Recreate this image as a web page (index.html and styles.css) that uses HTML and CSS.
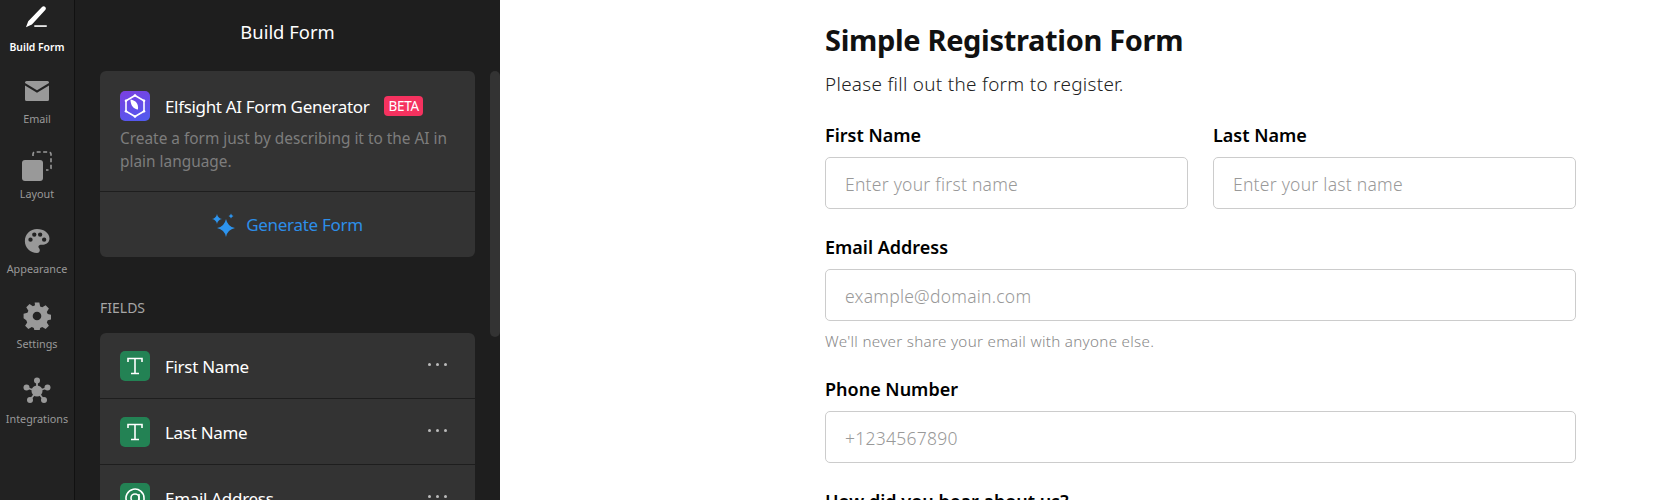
FILE: index.html
```html
<!DOCTYPE html>
<html lang="en">
<head>
    <meta charset="UTF-8">
    <title>Build Form</title>
    <link rel="stylesheet" href="styles.css">
</head>
<body>
    <nav class="rail">
        <a class="rail-item rail-item-active">
            <span class="rail-icon"><svg viewBox="0 0 24 24" width="26" height="26"><path d="M16.600 1.800c.9-.8 2.200-.8 3 0 .8.8.8 2 0 2.900L7.300 17.900 1.800 20.600 3.900 15z"/><rect x="9.500" y="18.700" width="11.500" height="1.500"/></svg></span>
            <span>Build Form</span>
        </a>
        <a class="rail-item">
            <span class="rail-icon"><svg viewBox="0 0 24 20" width="24" height="20"><path d="M0 1.500A1.500 1.500 0 0 1 1.500 0h21A1.500 1.500 0 0 1 24 1.500v.6l-12 7.200L0 2.100zM0 4.600l12 7.200 12-7.200v13.900a1.500 1.500 0 0 1-1.500 1.500h-21A1.500 1.500 0 0 1 0 18.500z"/></svg></span>
            <span>Email</span>
        </a>
        <a class="rail-item">
            <span class="rail-icon"><svg viewBox="0 0 30 30" width="30" height="30"><rect x="0" y="9" width="21" height="21" rx="3"/><path class="dash" d="M11 5V3a2 2 0 0 1 2-2h14a2 2 0 0 1 2 2v14a2 2 0 0 1-2 2h-3"/></svg></span>
            <span>Layout</span>
        </a>
        <a class="rail-item">
            <span class="rail-icon"><svg viewBox="0 0 24 24" width="26" height="26" fill-rule="evenodd"><path d="M12 1C5.700 1 .8 5.800.8 12S5.800 23 12 23c1.500 0 2.600-1.100 2.600-2.500 0-.7-.3-1.200-.7-1.700-.4-.4-.6-.9-.6-1.400 0-1.100.9-2 2-2h2.500c3.300 0 5.700-2.500 5.700-5.600C23.500 4.800 18.500 1 12 1zM6 12.800a2 2 0 1 1 0-4 2 2 0 0 1 0 4zm3.500-4.700a2 2 0 1 1 0-4 2 2 0 0 1 0 4zm5.400 0a2 2 0 1 1 0-4 2 2 0 0 1 0 4zm3.700 4.700a2 2 0 1 1 0-4 2 2 0 0 1 0 4z"/></svg></span>
            <span>Appearance</span>
        </a>
        <a class="rail-item">
            <span class="rail-icon"><svg viewBox="0 0 24 24" width="28" height="28" fill-rule="evenodd"><path d="M10 .5h4l.7 3.300 1.800.8 2.900-1.800 2.800 2.800-1.800 2.900.8 1.800 3.300.7v4l-3.300.7-.8 1.800 1.800 2.900-2.800 2.800-2.900-1.800-1.800.8-.7 3.300h-4l-.7-3.300-1.800-.8-2.900 1.800-2.800-2.800 1.800-2.900-.8-1.800L.500 14v-4l3.300-.7.8-1.800-1.800-2.900 2.800-2.800 2.900 1.800 1.800-.8zM12 8.300a3.700 3.700 0 1 0 0 7.400 3.700 3.700 0 0 0 0-7.400z"/></svg></span>
            <span>Settings</span>
        </a>
        <a class="rail-item">
            <span class="rail-icon"><svg viewBox="0 0 28 28" width="28" height="28"><circle cx="14" cy="14" r="5.500"/><circle cx="14" cy="3.500" r="3"/><circle cx="3.500" cy="10.500" r="3"/><circle cx="24.500" cy="10.500" r="3"/><circle cx="7" cy="23" r="3"/><circle cx="21" cy="23" r="3"/><path class="spoke" d="M14 14V4M14 14 4 11M14 14l10-3M14 14 7 23M14 14l7 9"/></svg></span>
            <span>Integrations</span>
        </a>
    </nav>

    <aside class="panel">
        <div class="panel-scroll">
            <h2 class="panel-title">Build Form</h2>

            <div class="card">
                <div class="ai-box">
                    <div class="ai-head">
                        <span class="field-icon ai-icon">
                            <svg viewBox="0 0 30 30" width="30" height="30"><path class="ai-hex" d="M15 4.500 24 9.700v10.600L15 25.500 6 20.300V9.700z"/><path class="ai-leaf" d="M10.500 8.500c5.500 1 8 4 7.500 10-4.500-.5-7.500-4-7.500-10z"/><circle cx="15" cy="4.500" r="1.300"/><circle cx="24" cy="9.700" r="1.300"/><circle cx="24" cy="20.300" r="1.300"/><circle cx="15" cy="25.500" r="1.300"/><circle cx="6" cy="20.300" r="1.300"/><circle cx="6" cy="9.700" r="1.300"/></svg>
                        </span>
                        <span class="ai-name">Elfsight AI Form Generator</span>
                        <span class="beta">BETA</span>
                    </div>
                    <p class="ai-desc">Create a form just by describing it to the AI in plain language.</p>
                </div>
                <div class="generate">
                    <svg class="sparkle" viewBox="0 0 24 24" width="24" height="24"><path d="M14 6Q15.500 13.500 23 15 15.500 16.500 14 24 12.500 16.500 5 15 12.500 13.500 14 6z"/><path d="M5 1Q5.800 5.200 10 6 5.800 6.800 5 11 4.200 6.800 0 6 4.200 5.200 5 1z"/><path d="M19 .5Q19.500 2.500 21.500 3 19.500 3.500 19 5.500 18.500 3.500 16.500 3 18.500 2.500 19 .5z"/></svg>
                    <span>Generate Form</span>
                </div>
            </div>

            <div class="fields-label">FIELDS</div>

            <div class="card">
                <div class="field-row">
                    <span class="field-icon field-icon-green"><svg class="glyph" viewBox="0 0 30 30" width="30" height="30"><path d="M8 11V7.500h14V11M15 7.500V22M11 22.500h8"/></svg></span>
                    <span class="field-name">First Name</span>
                    <span class="dots"><i></i><i></i><i></i></span>
                </div>
                <div class="field-row">
                    <span class="field-icon field-icon-green"><svg class="glyph" viewBox="0 0 30 30" width="30" height="30"><path d="M8 11V7.500h14V11M15 7.500V22M11 22.500h8"/></svg></span>
                    <span class="field-name">Last Name</span>
                    <span class="dots"><i></i><i></i><i></i></span>
                </div>
                <div class="field-row">
                    <span class="field-icon field-icon-green"><svg class="glyph" viewBox="0 0 30 30" width="30" height="30"><circle cx="15" cy="15" r="4"/><path d="M19 11v5.500a2.500 2.500 0 0 0 5 0V15a9 9 0 1 0-4 7.500"/></svg></span>
                    <span class="field-name">Email Address</span>
                    <span class="dots"><i></i><i></i><i></i></span>
                </div>
            </div>
        </div>
        <div class="scrollbar"></div>
    </aside>

    <main class="preview">
        <form class="form">
            <h1 class="form-title">Simple Registration Form</h1>
            <p class="form-sub">Please fill out the form to register.</p>

            <div class="row-2">
                <div class="group">
                    <label class="label">First Name</label>
                    <div class="input">Enter your first name</div>
                </div>
                <div class="group">
                    <label class="label">Last Name</label>
                    <div class="input">Enter your last name</div>
                </div>
            </div>

            <div class="group">
                <label class="label">Email Address</label>
                <div class="input">example@domain.com</div>
                <div class="hint">We'll never share your email with anyone else.</div>
            </div>

            <div class="group">
                <label class="label">Phone Number</label>
                <div class="input">+1234567890</div>
            </div>

            <div class="group">
                <label class="label">How did you hear about us?</label>
            </div>
        </form>
    </main>
</body>
</html>
```

FILE: styles.css
```css
html, body {
    height: 100%;
}
body {
    margin: 0;
    height: 500px;
    display: flex;
    overflow: hidden;
    font-family: "Noto Sans", "Open Sans", sans-serif;
    background-color: #ffffff;
}

/* left icon rail */
.rail {
    width: 74px;
    flex-shrink: 0;
    background-color: #222222;
    border-right: 1px solid #111111;
    padding-top: 9px;
}
.rail-item {
    display: flex;
    flex-direction: column;
    align-items: center;
    height: 75px;
    color: #999999;
    font-size: 10.8px;
    line-height: 14px;
}
.rail-item:first-child {
    height: 73px;
}
.rail-icon {
    height: 30px;
    margin: -6px 0 6px;
    display: flex;
    align-items: center;
    justify-content: center;
    fill: #999999;
}
.rail-item-active {
    color: #ffffff;
    font-weight: 600;
    font-size: 10.4px;
}
.rail-item-active .rail-icon {
    margin-bottom: 7px;
    fill: #ffffff;
}
.dash {
    fill: none;
    stroke: #999999;
    stroke-width: 1.6;
    stroke-dasharray: 4 2.5;
}
.spoke {
    fill: none;
    stroke: #999999;
    stroke-width: 1.8;
}

/* build form panel */
.panel {
    width: 425px;
    flex-shrink: 0;
    display: flex;
    background-color: #1e1e1e;
    overflow: hidden;
}
.panel-scroll {
    width: 375px;
    margin-left: 25px;
    flex-shrink: 0;
}
.panel-title {
    margin: 0;
    height: 71px;
    line-height: 63px;
    text-align: center;
    font-size: 18.4px;
    font-weight: 400;
    color: #ffffff;
}
.card {
    background-color: #333333;
    border-radius: 6px;
}
.ai-box {
    padding: 20px 20px 15px;
    border-bottom: 1px solid #1e1e1e;
}
.ai-head {
    display: flex;
    align-items: center;
    height: 30px;
}
.field-icon {
    width: 30px;
    height: 30px;
    border-radius: 5px;
    flex-shrink: 0;
    overflow: hidden;
}
.ai-icon {
    background: linear-gradient(160deg, #7c3fe0, #4f5cf0);
}
.ai-icon svg {
    fill: #ffffff;
}
.ai-hex {
    fill: none;
    stroke: #ffffff;
    stroke-width: 1.6;
}
.ai-name {
    margin-left: 15px;
    font-size: 17px;
    letter-spacing: -0.33px;
    color: #ffffff;
}
.beta {
    margin-left: 15px;
    padding: 0 4px;
    height: 20px;
    line-height: 20px;
    border-radius: 4px;
    background-color: #f5325f;
    color: #ffffff;
    font-size: 13.5px;
    letter-spacing: -0.2px;
}
.ai-desc {
    margin: 0;
    padding: 6px 0 3px;
    font-size: 15.4px;
    line-height: 23px;
    color: #7d7d7d;
}
.generate {
    height: 65px;
    display: flex;
    align-items: center;
    justify-content: center;
    gap: 10px;
    color: #2d8ee8;
    font-size: 17px;
    letter-spacing: -0.3px;
}
.sparkle {
    fill: #2d94ee;
}
.fields-label {
    margin-top: 42px;
    height: 34px;
    font-size: 14px;
    line-height: 17px;
    color: #a6a6a6;
}
.field-row {
    height: 65px;
    padding: 0 28px 0 20px;
    display: flex;
    align-items: center;
    border-bottom: 1px solid #1e1e1e;
}
.field-icon-green {
    background-color: #238254;
}
.glyph {
    fill: none;
    stroke: #ffffff;
    stroke-width: 1.6;
}
.field-name {
    margin-left: 15px;
    padding-top: 1px;
    font-size: 17px;
    letter-spacing: -0.3px;
    color: #ffffff;
    flex: 1;
}
.dots {
    display: flex;
    gap: 4.5px;
    margin-bottom: 2px;
}
.dots i {
    width: 3.5px;
    height: 3.5px;
    border-radius: 50%;
    background-color: #bbbbbb;
}
.scrollbar {
    width: 10px;
    height: 266px;
    margin: 71px 0 0 15px;
    flex-shrink: 0;
    border-radius: 5px;
    background-color: #333333;
}

/* form preview */
.preview {
    flex: 1;
    padding-left: 325px;
}
.form {
    width: 751px;
}
.form-title {
    margin: 0;
    padding-top: 19px;
    font-size: 29px;
    letter-spacing: -0.33px;
    line-height: 42px;
    font-weight: 700;
    color: #111111;
}
.form-sub {
    margin: 0;
    padding-top: 11px;
    font-size: 18.9px;
    font-weight: 300;
    letter-spacing: 0.3px;
    line-height: 25px;
    color: #222222;
}
.row-2 {
    display: grid;
    grid-template-columns: 1fr 1fr;
    gap: 25px;
}
.group {
    margin-top: 26px;
}
.label {
    display: block;
    font-size: 18px;
    font-weight: 600;
    line-height: 25px;
    color: #000000;
    margin-bottom: 9px;
}
.input {
    height: 49px;
    padding: 1px 19px 0;
    display: flex;
    align-items: center;
    border: 1px solid #cccccc;
    border-radius: 5px;
    font-size: 17.5px;
    font-weight: 300;
    letter-spacing: 0.25px;
    color: #999999;
}
.hint {
    margin-top: 10px;
    font-size: 15.2px;
    font-weight: 300;
    letter-spacing: 0.3px;
    line-height: 20px;
    color: #888888;
}
```
